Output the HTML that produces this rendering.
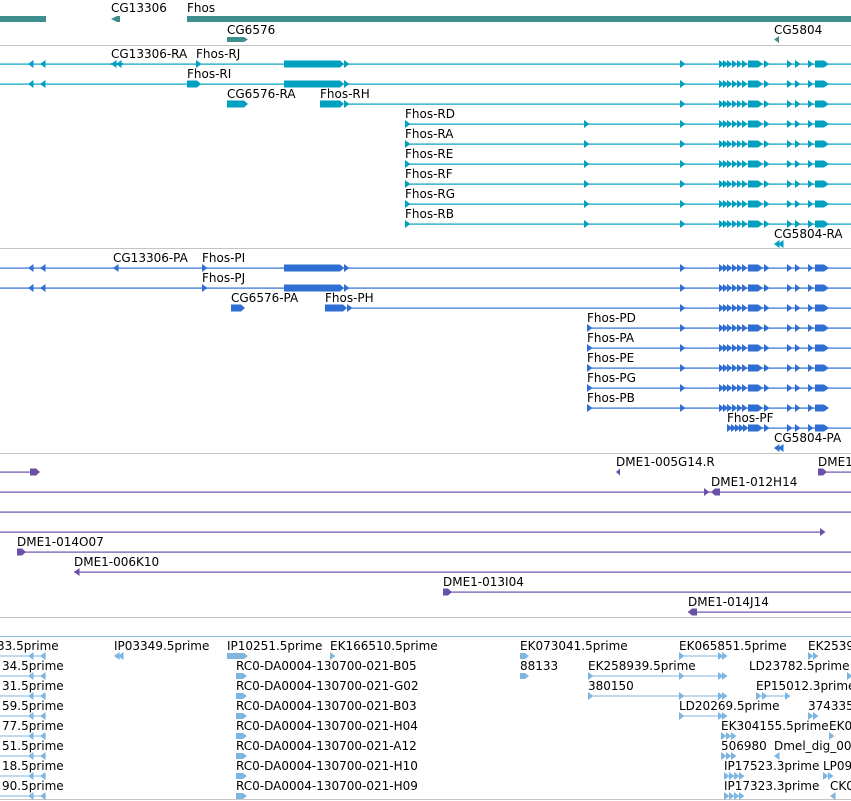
<!DOCTYPE html>
<html><head><meta charset="utf-8"><style>
html,body{margin:0;padding:0;background:#fff;width:851px;height:801px;overflow:hidden}
svg{display:block}
text{font-family:"DejaVu Sans","Liberation Sans",sans-serif;font-size:12px;fill:#000}
</style></head><body>
<svg width="851" height="801" viewBox="0 0 851 801" xmlns="http://www.w3.org/2000/svg">
<defs>
<path id="ar" d="M0 -4L5.5 0L0 4Z" fill="currentColor"/>
<path id="al" d="M5.5 -4L0 0L5.5 4Z" fill="currentColor"/>
<g id="cl" fill="currentColor">
<use href="#ar" x="680"/><use href="#ar" x="719"/><use href="#ar" x="723"/><use href="#ar" x="727"/><use href="#ar" x="732"/><use href="#ar" x="737"/><use href="#ar" x="742"/>
<path d="M748 -3.5H758L763 0L758 3.5H748Z"/><use href="#ar" x="764"/>
<use href="#ar" x="787"/><use href="#ar" x="795"/><use href="#ar" x="808"/>
<path d="M815 -3.5H824L829 0L824 3.5H815Z"/>
</g>
<g id="big" fill="currentColor"><path d="M284 -3.5H340L344 0L340 3.5H284Z"/><use href="#ar" x="344"/></g>
<g id="ll" fill="currentColor"><use href="#al" x="28"/><use href="#al" x="40"/></g>
</defs>
<g fill="#c4c4c4"><rect x="0" y="45" width="851" height="1"/><rect x="0" y="248" width="851" height="1"/><rect x="0" y="453" width="851" height="1"/><rect x="0" y="617" width="851" height="1"/><rect x="0" y="799" width="851" height="1"/></g>
<rect x="0" y="636" width="851" height="1" fill="#8fc0e3"/>

<g fill="#3e8e8e">
<rect x="0" y="16" width="46" height="6"/><rect x="187" y="16" width="664" height="6"/>
<path d="M111 19L117 16H120V22H117Z"/>
<path d="M227 37H244L248 39.5L244 42H227Z"/>
<path d="M774 39.5L779 36V43Z"/>
</g>
<text x="111" y="12">CG13306</text><text x="187" y="12">Fhos</text><text x="227" y="34">CG6576</text><text x="774" y="34">CG5804</text>

<g style="color:#00a0c0" fill="#00a0c0">
<rect x="0" y="63.5" width="851" height="1.2"/><use href="#ll" y="64"/><use href="#al" x="111" y="64"/><use href="#al" x="116" y="64"/><rect x="111" y="63" width="12" height="2"/><use href="#ar" x="196" y="64"/><use href="#big" y="64"/><use href="#cl" y="64"/>
<rect x="0" y="83.5" width="851" height="1.2"/><use href="#ll" y="84"/><path d="M187 80.5H197L201 84L197 87.5H187Z"/><use href="#big" y="84"/><use href="#cl" y="84"/>
<path d="M227 100.5H244L248 104L244 107.5H227Z"/><path d="M320 100.5H340L344 104L340 107.5H320Z"/><use href="#ar" x="344" y="104"/><rect x="344" y="103.5" width="507" height="1.2"/><use href="#cl" y="104"/>
<rect x="405" y="123.5" width="446" height="1.2"/><use href="#ar" x="405" y="124"/><use href="#ar" x="584" y="124"/><use href="#cl" y="124"/>
<rect x="405" y="143.5" width="446" height="1.2"/><use href="#ar" x="405" y="144"/><use href="#ar" x="584" y="144"/><use href="#cl" y="144"/>
<rect x="405" y="163.5" width="446" height="1.2"/><use href="#ar" x="405" y="164"/><use href="#ar" x="584" y="164"/><use href="#cl" y="164"/>
<rect x="405" y="183.5" width="446" height="1.2"/><use href="#ar" x="405" y="184"/><use href="#ar" x="584" y="184"/><use href="#cl" y="184"/>
<rect x="405" y="203.5" width="446" height="1.2"/><use href="#ar" x="405" y="204"/><use href="#ar" x="584" y="204"/><use href="#cl" y="204"/>
<rect x="405" y="223.5" width="446" height="1.2"/><use href="#ar" x="405" y="224"/><use href="#ar" x="584" y="224"/><use href="#cl" y="224"/>
<use href="#al" x="774" y="244"/><use href="#al" x="778" y="244"/>
</g>
<text x="111" y="58">CG13306-RA</text><text x="196" y="58">Fhos-RJ</text><text x="187" y="78">Fhos-RI</text>
<text x="227" y="98">CG6576-RA</text><text x="320" y="98">Fhos-RH</text>
<text x="405" y="118">Fhos-RD</text><text x="405" y="138">Fhos-RA</text><text x="405" y="158">Fhos-RE</text><text x="405" y="178">Fhos-RF</text><text x="405" y="198">Fhos-RG</text><text x="405" y="218">Fhos-RB</text><text x="774" y="238">CG5804-RA</text>

<g style="color:#2f6ed2" fill="#2f6ed2">
<rect x="0" y="267.5" width="851" height="1.2"/><use href="#ll" y="268"/><use href="#al" x="113" y="268"/><use href="#ar" x="202" y="268"/><use href="#big" y="268"/><use href="#cl" y="268"/>
<rect x="0" y="287.5" width="851" height="1.2"/><use href="#ll" y="288"/><use href="#ar" x="202" y="288"/><use href="#big" y="288"/><use href="#cl" y="288"/>
<path d="M231 304.5H241L245 308L241 311.5H231Z"/><path d="M325 304.5H343L347 308L343 311.5H325Z"/><use href="#ar" x="347" y="308"/><rect x="347" y="307.5" width="504" height="1.2"/><use href="#cl" y="308"/>
<rect x="587" y="327.5" width="264" height="1.2"/><use href="#ar" x="587" y="328"/><use href="#cl" y="328"/>
<rect x="587" y="347.5" width="264" height="1.2"/><use href="#ar" x="587" y="348"/><use href="#cl" y="348"/>
<rect x="587" y="367.5" width="264" height="1.2"/><use href="#ar" x="587" y="368"/><use href="#cl" y="368"/>
<rect x="587" y="387.5" width="264" height="1.2"/><use href="#ar" x="587" y="388"/><use href="#cl" y="388"/>
<rect x="587" y="407.5" width="241" height="1.2"/><use href="#ar" x="587" y="408"/><use href="#cl" y="408"/>
<rect x="727" y="427.5" width="124" height="1.2"/><use href="#ar" x="727" y="428"/><use href="#ar" x="731" y="428"/><use href="#ar" x="735" y="428"/><use href="#ar" x="739" y="428"/><use href="#ar" x="743" y="428"/><path d="M748 424.5H758L763 428L758 431.5H748Z"/><use href="#ar" x="764" y="428"/><use href="#ar" x="787" y="428"/><use href="#ar" x="795" y="428"/><use href="#ar" x="808" y="428"/><path d="M815 424.5H824L829 428L824 431.5H815Z"/>
<use href="#al" x="774" y="448"/><use href="#al" x="778" y="448"/>
</g>
<text x="113" y="262">CG13306-PA</text><text x="202" y="262">Fhos-PI</text><text x="202" y="282">Fhos-PJ</text>
<text x="231" y="302">CG6576-PA</text><text x="325" y="302">Fhos-PH</text>
<text x="587" y="322">Fhos-PD</text><text x="587" y="342">Fhos-PA</text><text x="587" y="362">Fhos-PE</text><text x="587" y="382">Fhos-PG</text><text x="587" y="402">Fhos-PB</text><text x="727" y="422">Fhos-PF</text><text x="774" y="442">CG5804-PA</text>

<g style="color:#6b50a8" fill="#6b50a8">
<rect x="0" y="471.5" width="32" height="1.2"/><path d="M30 468.5H36L40 472L36 475.5H30Z"/>
<path d="M616 472L620 468.5V475.5Z"/><path d="M818 468.5H823L827 472L823 475.5H818Z"/><rect x="818" y="471.5" width="33" height="1.2"/>
<rect x="0" y="491.5" width="851" height="1.2"/><use href="#ar" x="704" y="492"/><path d="M711 492L715 488.5H720V495.5H715Z"/>
<rect x="0" y="511.5" width="851" height="1.2"/>
<rect x="0" y="531.5" width="822" height="1.2"/><use href="#ar" x="820" y="532"/>
<rect x="17" y="551.5" width="834" height="1.2"/><path d="M17 548.5H22L26 552L22 555.5H17Z"/>
<rect x="74" y="571.5" width="777" height="1.2"/><use href="#al" x="74" y="572"/>
<rect x="443" y="591.5" width="408" height="1.2"/><path d="M443 588.5H448L452 592L448 595.5H443Z"/>
<rect x="688" y="611.5" width="163" height="1.2"/><path d="M688 612L692 608.5H697V615.5H692Z"/>
</g>
<text x="616" y="466">DME1-005G14.R</text><text x="818" y="466">DME1</text><text x="711" y="486">DME1-012H14</text>
<text x="17" y="546">DME1-014O07</text><text x="74" y="566">DME1-006K10</text><text x="443" y="586">DME1-013I04</text><text x="688" y="606">DME1-014J14</text>

<g style="color:#7fb6e0" fill="#7fb6e0">
<rect x="0" y="655.5" width="46" height="1"/><use href="#ll" y="656"/>
<rect x="0" y="675.5" width="46" height="1"/><use href="#ll" y="676"/>
<rect x="0" y="695.5" width="46" height="1"/><use href="#ll" y="696"/>
<rect x="0" y="715.5" width="46" height="1"/><use href="#ll" y="716"/>
<rect x="0" y="735.5" width="46" height="1"/><use href="#ll" y="736"/>
<rect x="0" y="755.5" width="46" height="1"/><use href="#ll" y="756"/>
<rect x="0" y="775.5" width="46" height="1"/><use href="#ll" y="776"/>
<rect x="0" y="795.5" width="46" height="1"/><use href="#ll" y="796"/>
<use href="#al" x="114" y="656"/><use href="#al" x="118" y="656"/>
<path d="M227 653H244L248 656L244 659H227Z"/><use href="#ar" x="330" y="656"/>
<path d="M236 673H243L247 676L243 679H236Z"/><path d="M236 693H243L247 696L243 699H236Z"/><path d="M236 713H243L247 716L243 719H236Z"/><path d="M236 733H243L247 736L243 739H236Z"/><path d="M236 753H243L247 756L243 759H236Z"/><path d="M236 773H243L247 776L243 779H236Z"/><path d="M236 793H243L247 796L243 799H236Z"/>
<path d="M520 653H525L529 656L525 659H520Z"/><path d="M520 673H525L529 676L525 679H520Z"/>
<rect x="679" y="655.5" width="46" height="1"/><use href="#ar" x="679" y="656"/><use href="#ar" x="718" y="656"/><use href="#ar" x="722" y="656"/>
<rect x="588" y="675.5" width="137" height="1"/><use href="#ar" x="588" y="676"/><use href="#ar" x="679" y="676"/><use href="#ar" x="718" y="676"/><use href="#ar" x="722" y="676"/>
<rect x="588" y="695.5" width="137" height="1"/><use href="#ar" x="588" y="696"/><use href="#ar" x="679" y="696"/><use href="#ar" x="718" y="696"/><use href="#ar" x="722" y="696"/>
<rect x="679" y="715.5" width="46" height="1"/><use href="#ar" x="679" y="716"/><use href="#ar" x="718" y="716"/><use href="#ar" x="722" y="716"/>
<use href="#ar" x="808" y="656"/><use href="#ar" x="813" y="656"/>
<rect x="756" y="695.5" width="34" height="1"/><use href="#ar" x="756" y="696"/><use href="#ar" x="762" y="696"/><use href="#ar" x="785" y="696"/><use href="#ar" x="847" y="676"/>
<use href="#ar" x="721" y="736"/><use href="#ar" x="726" y="736"/><use href="#ar" x="731" y="736"/><use href="#ar" x="808" y="716"/><use href="#ar" x="813" y="716"/><use href="#ar" x="829" y="736"/>
<use href="#ar" x="721" y="756"/><use href="#ar" x="726" y="756"/><use href="#ar" x="731" y="756"/><use href="#al" x="774" y="756"/>
<use href="#ar" x="724" y="776"/><use href="#ar" x="729" y="776"/><use href="#ar" x="734" y="776"/><use href="#ar" x="739" y="776"/><use href="#ar" x="823" y="776"/><use href="#ar" x="828" y="776"/>
<use href="#ar" x="724" y="796"/><use href="#ar" x="729" y="796"/><use href="#ar" x="734" y="796"/><use href="#ar" x="739" y="796"/><use href="#al" x="830" y="796"/>
</g>
<text x="-3" y="650">33.5prime</text><text x="2" y="670">34.5prime</text><text x="2" y="690">31.5prime</text><text x="2" y="710">59.5prime</text><text x="2" y="730">77.5prime</text><text x="2" y="750">51.5prime</text><text x="2" y="770">18.5prime</text><text x="2" y="790">90.5prime</text>
<text x="114" y="650">IP03349.5prime</text><text x="227" y="650">IP10251.5prime</text><text x="330" y="650">EK166510.5prime</text>
<text x="236" y="670">RC0-DA0004-130700-021-B05</text><text x="236" y="690">RC0-DA0004-130700-021-G02</text><text x="236" y="710">RC0-DA0004-130700-021-B03</text><text x="236" y="730">RC0-DA0004-130700-021-H04</text><text x="236" y="750">RC0-DA0004-130700-021-A12</text><text x="236" y="770">RC0-DA0004-130700-021-H10</text><text x="236" y="790">RC0-DA0004-130700-021-H09</text>
<text x="520" y="650">EK073041.5prime</text><text x="520" y="670">88133</text><text x="588" y="670">EK258939.5prime</text><text x="588" y="690">380150</text>
<text x="679" y="650">EK065851.5prime</text><text x="679" y="710">LD20269.5prime</text><text x="808" y="650">EK2539</text>
<text x="749" y="670">LD23782.5prime</text><text x="756" y="690">EP15012.3prime</text><text x="808" y="710">374335</text>
<text x="721" y="730">EK304155.5prime</text><text x="829" y="730">EK0</text><text x="721" y="750">506980</text><text x="774" y="750">Dmel_dig_00</text>
<text x="724" y="770">IP17523.3prime</text><text x="823" y="770">LP09</text><text x="724" y="790">IP17323.3prime</text><text x="830" y="790">CK0</text>
</svg>
</body></html>
